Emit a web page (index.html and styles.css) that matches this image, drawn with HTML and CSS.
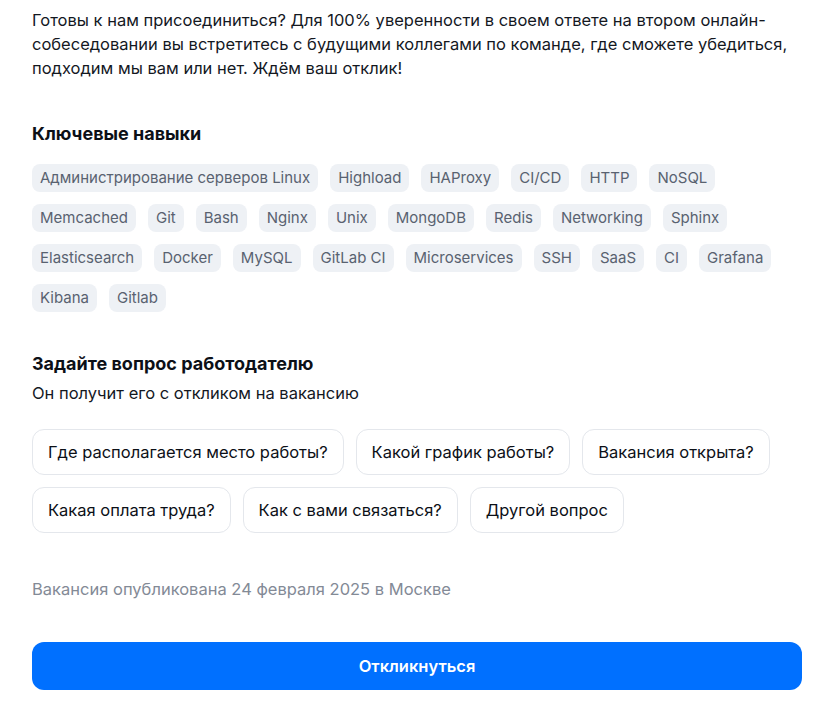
FILE: index.html
```html
<!DOCTYPE html>
<html lang="ru">
<head>
<meta charset="utf-8">
<link rel="stylesheet" href="styles.css">
</head>
<body>
<div class="page">
  <p class="intro">Готовы к нам присоединиться? Для 100% уверенности в своем ответе на втором онлайн-собеседовании вы встретитесь с будущими коллегами по команде, где сможете убедиться, подходим мы вам или нет. Ждём ваш отклик!</p>

  <section class="skills">
    <h2 class="title">Ключевые навыки</h2>
    <ul class="tags">
      <li class="tag">Администрирование серверов Linux</li>
      <li class="tag">Highload</li>
      <li class="tag">HAProxy</li>
      <li class="tag">CI/CD</li>
      <li class="tag">HTTP</li>
      <li class="tag">NoSQL</li>
      <li class="tag">Memcached</li>
      <li class="tag">Git</li>
      <li class="tag">Bash</li>
      <li class="tag">Nginx</li>
      <li class="tag">Unix</li>
      <li class="tag">MongoDB</li>
      <li class="tag">Redis</li>
      <li class="tag">Networking</li>
      <li class="tag">Sphinx</li>
      <li class="tag">Elasticsearch</li>
      <li class="tag">Docker</li>
      <li class="tag">MySQL</li>
      <li class="tag">GitLab CI</li>
      <li class="tag">Microservices</li>
      <li class="tag">SSH</li>
      <li class="tag">SaaS</li>
      <li class="tag">CI</li>
      <li class="tag">Grafana</li>
      <li class="tag">Kibana</li>
      <li class="tag">Gitlab</li>
    </ul>
  </section>

  <section class="ask">
    <h2 class="title">Задайте вопрос работодателю</h2>
    <p class="subtitle">Он получит его с откликом на вакансию</p>
    <div class="questions">
      <button class="q">Где располагается место работы?</button>
      <button class="q">Какой график работы?</button>
      <button class="q">Вакансия открыта?</button>
      <button class="q">Какая оплата труда?</button>
      <button class="q">Как с вами связаться?</button>
      <button class="q">Другой вопрос</button>
    </div>
  </section>

  <p class="published">Вакансия опубликована 24 февраля 2025 в Москве</p>

  <button class="apply">Откликнуться</button>
</div>
</body>
</html>
```

FILE: styles.css
```css
* { box-sizing: border-box; }
html, body { margin: 0; padding: 0; background: #fff; }
body {
  font-family: Inter, "Noto Sans", "Liberation Sans", sans-serif;
  color: #0c1017;
}
.page {
  width: 770px;
  margin-left: 32px;
  padding-top: 8px;
}
.intro {
  margin: 0;
  font-size: 16.5px;
  line-height: 24px;
  color: #14181f;
}
.skills { margin-top: 40px; }
.title {
  margin: 0;
  font-size: 18px;
  line-height: 28px;
  font-weight: 700;
  color: #0c1017;
}
.tags {
  list-style: none;
  margin: 16px 0 0;
  padding: 0;
  display: flex;
  flex-wrap: wrap;
  gap: 12px;
}
.tag {
  height: 28px;
  line-height: 28px;
  padding: 0 8px;
  border-radius: 8px;
  background: #eef1f5;
  color: #596270;
  font-size: 15px;
}
.ask { margin-top: 38px; }
.subtitle {
  margin: 3px 0 0;
  font-size: 16.5px;
  line-height: 24px;
  color: #14181f;
}
.questions {
  margin-top: 24px;
  display: flex;
  flex-wrap: wrap;
  gap: 12px;
}
.q {
  font-family: inherit;
  height: 46px;
  padding: 0 15px;
  border: 1px solid #e4e7ec;
  border-radius: 12px;
  background: #fff;
  font-size: 16.5px;
  color: #0c1017;
}
.published {
  margin: 44px 0 0;
  font-size: 16.5px;
  line-height: 24px;
  color: #838a96;
}
.apply {
  display: block;
  margin-top: 41px;
  width: 770px;
  height: 48px;
  border: 0;
  border-radius: 12px;
  background: #0070ff;
  color: #fff;
  font-family: inherit;
  font-size: 16.5px;
  font-weight: 600;
}
```
